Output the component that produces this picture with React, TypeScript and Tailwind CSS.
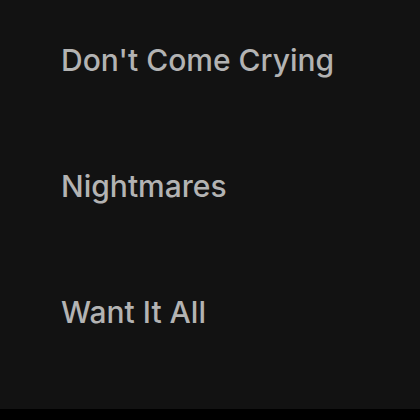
import React from 'react'

const tracks = ["Don't Come Crying", 'Nightmares', 'Want It All']

export default function App() {
  return (
    <div className="w-[420px] h-[420px] bg-black flex flex-col overflow-hidden">
      <div className="h-[409px] bg-[#121212] flex flex-col pl-[61px] pt-[44px] gap-[94px] font-['Inter',sans-serif]">
        {tracks.map((t) => (
          <div key={t} className="text-[#b3b3b3] text-[30px] leading-[32px] font-medium">
            {t}
          </div>
        ))}
      </div>
    </div>
  )
}
